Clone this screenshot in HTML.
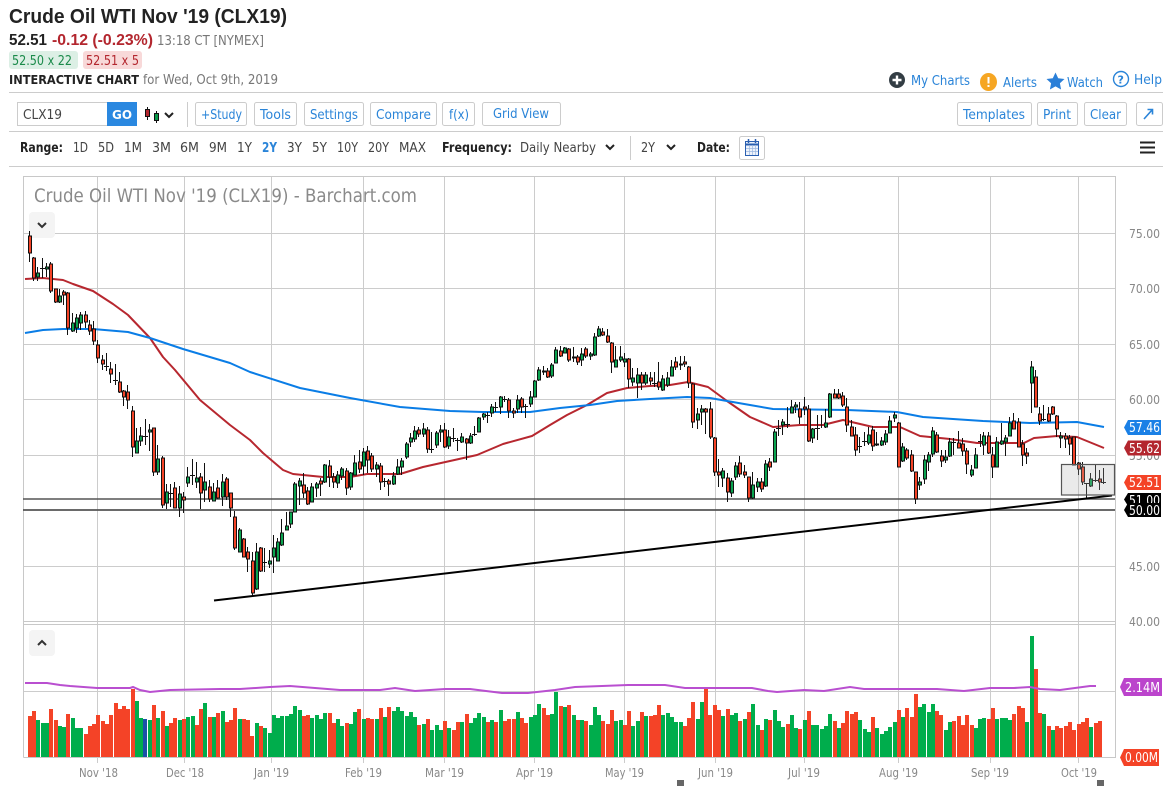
<!DOCTYPE html>
<html><head><meta charset="utf-8"><title>Crude Oil WTI Nov '19 (CLX19)</title>
<style>
html,body{margin:0;padding:0;background:#fff;width:1167px;height:786px;overflow:hidden}
svg{display:block}
text{font-family:"DejaVu Sans","Liberation Sans",sans-serif;font-size:12px}
.b{fill:#2a84d8;font-size:13.5px}
.n{fill:#444;font-size:13px}
.h{fill:#222;font-size:13px;font-weight:bold}
.a{fill:#888;font-size:12.5px}
.w{fill:#fff;font-size:13.5px}
.btn{fill:#fff;stroke:#ccc;stroke-width:1}
</style></head><body>
<svg width="1167" height="786" viewBox="0 0 1167 786" xmlns="http://www.w3.org/2000/svg">
<rect width="1167" height="786" fill="#fff"/>
<!-- header -->
<text x="9" y="23" textLength="278" lengthAdjust="spacingAndGlyphs" style="font-family:'Liberation Sans',sans-serif;font-size:20px;font-weight:bold;fill:#222">Crude Oil WTI Nov '19 (CLX19)</text>
<text x="9" y="45" textLength="38" lengthAdjust="spacingAndGlyphs" style="font-family:'Liberation Sans',sans-serif;font-size:16px;font-weight:bold;fill:#222">52.51</text>
<text x="52" y="45" textLength="101" lengthAdjust="spacingAndGlyphs" style="font-family:'Liberation Sans',sans-serif;font-size:16px;font-weight:bold;fill:#b3262e">-0.12 (-0.23%)</text>
<text x="157" y="45" textLength="107" lengthAdjust="spacingAndGlyphs" style="font-size:13.5px;fill:#777">13:18 CT [NYMEX]</text>
<rect x="9" y="51" width="69" height="18" rx="3" fill="#dcefe5"/>
<text x="12" y="65" textLength="60" lengthAdjust="spacingAndGlyphs" style="font-size:13px;fill:#1a8a4a">52.50 x 22</text>
<rect x="83" y="51" width="59" height="18" rx="3" fill="#f8d9d9"/>
<text x="86" y="65" textLength="53" lengthAdjust="spacingAndGlyphs" style="font-size:13px;fill:#b3262e">52.51 x 5</text>
<text x="9" y="84" textLength="130" lengthAdjust="spacingAndGlyphs" style="font-size:12.5px;font-weight:bold;fill:#222">INTERACTIVE CHART</text>
<text x="143" y="84" textLength="135" lengthAdjust="spacingAndGlyphs" style="font-size:13.5px;fill:#777">for Wed, Oct 9th, 2019</text>
<!-- top right links -->
<circle cx="897" cy="80" r="8" fill="#333d44"/><path d="M897 75.5v9M892.5 80h9" stroke="#fff" stroke-width="2.4"/>
<text class="b" x="911" y="85" textLength="59" lengthAdjust="spacingAndGlyphs">My Charts</text>
<ellipse cx="988.500" cy="82" rx="8.500" ry="9" fill="#f6a623"/><path d="M988.500 77v6.500M988.500 85v2" stroke="#fff" stroke-width="2"/>
<text class="b" x="1003" y="87" textLength="34" lengthAdjust="spacingAndGlyphs">Alerts</text>
<path d="M1055.500 72.500l2.700 5.700 6.300.8-4.600 4.300 1.200 6.200-5.600-3.100-5.600 3.100 1.200-6.200-4.600-4.300 6.300-.8z" fill="#2a7fd8"/>
<text class="b" x="1067" y="87" textLength="36" lengthAdjust="spacingAndGlyphs">Watch</text>
<circle cx="1121" cy="79" r="7.500" fill="none" stroke="#2a84d8" stroke-width="1.400"/>
<text x="1117.500" y="83.500" style="font-size:11px;fill:#2a84d8;font-weight:bold">?</text>
<text class="b" x="1134" y="84" textLength="28" lengthAdjust="spacingAndGlyphs">Help</text>
<path d="M9 92.500H1163M9 131.500H1163M9 166.500H1163" stroke="#ccc" stroke-width="1" fill="none"/>
<!-- toolbar -->
<rect x="17.500" y="102.500" width="90" height="23" fill="#fff" stroke="#ccc"/>
<text x="23" y="119" textLength="39" lengthAdjust="spacingAndGlyphs" style="font-size:13.5px;fill:#444">CLX19</text>
<rect x="107" y="102" width="30" height="24" fill="#2a88e0"/>
<text x="112" y="119" textLength="20" lengthAdjust="spacingAndGlyphs" style="font-size:12.5px;font-weight:bold;fill:#fff">GO</text>
<path d="M147.500 107V120M156.500 111V123" stroke="#111" stroke-width="1"/>
<rect x="145.500" y="109.500" width="4" height="7" fill="#b3262e" stroke="#111"/>
<rect x="154.500" y="113.500" width="4" height="7" fill="#0a9a4a" stroke="#111"/>
<path d="M165 113l4 4 4-4" fill="none" stroke="#222" stroke-width="2"/>
<path d="M187.500 102V127" stroke="#ccc"/>
<rect class="btn" x="195.500" y="102.500" width="51" height="23" rx="2"/><text class="b" x="201" y="119" textLength="41" lengthAdjust="spacingAndGlyphs">+Study</text>
<rect class="btn" x="254.500" y="102.500" width="42" height="23" rx="2"/><text class="b" x="260" y="119" textLength="31" lengthAdjust="spacingAndGlyphs">Tools</text>
<rect class="btn" x="304.500" y="102.500" width="59" height="23" rx="2"/><text class="b" x="310" y="119" textLength="48" lengthAdjust="spacingAndGlyphs">Settings</text>
<rect class="btn" x="370.500" y="102.500" width="66" height="23" rx="2"/><text class="b" x="376" y="119" textLength="55" lengthAdjust="spacingAndGlyphs">Compare</text>
<rect class="btn" x="442.500" y="102.500" width="32" height="23" rx="2"/><text class="b" x="449" y="119" textLength="20" lengthAdjust="spacingAndGlyphs">f(x)</text>
<rect class="btn" x="482.500" y="102.500" width="78" height="23" rx="2"/><text class="b" x="493" y="118" textLength="56" lengthAdjust="spacingAndGlyphs">Grid View</text>
<rect class="btn" x="957.500" y="102.500" width="74" height="23" rx="2"/><text class="b" x="963" y="119" textLength="62" lengthAdjust="spacingAndGlyphs">Templates</text>
<rect class="btn" x="1037.500" y="102.500" width="40" height="23" rx="2"/><text class="b" x="1043" y="119" textLength="28" lengthAdjust="spacingAndGlyphs">Print</text>
<rect class="btn" x="1084.500" y="102.500" width="42" height="23" rx="2"/><text class="b" x="1090" y="119" textLength="31" lengthAdjust="spacingAndGlyphs">Clear</text>
<rect class="btn" x="1136.500" y="102.500" width="26" height="23" rx="2"/>
<path d="M1144 119l8-9M1147.500 109.500h5v5" fill="none" stroke="#2a84d8" stroke-width="1.600"/>
<!-- range row -->
<text class="h" x="20" y="152" textLength="43" lengthAdjust="spacingAndGlyphs">Range:</text>
<text class="n" x="73" y="152" textLength="15" lengthAdjust="spacingAndGlyphs">1D</text>
<text class="n" x="98" y="152" textLength="16" lengthAdjust="spacingAndGlyphs">5D</text>
<text class="n" x="124" y="152" textLength="18" lengthAdjust="spacingAndGlyphs">1M</text>
<text class="n" x="152" y="152" textLength="19" lengthAdjust="spacingAndGlyphs">3M</text>
<text class="n" x="180" y="152" textLength="19" lengthAdjust="spacingAndGlyphs">6M</text>
<text class="n" x="209" y="152" textLength="18" lengthAdjust="spacingAndGlyphs">9M</text>
<text class="n" x="237" y="152" textLength="15" lengthAdjust="spacingAndGlyphs">1Y</text>
<text x="262" y="152" textLength="15" lengthAdjust="spacingAndGlyphs" style="font-size:13px;font-weight:bold;fill:#2a84d8">2Y</text>
<text class="n" x="287" y="152" textLength="15" lengthAdjust="spacingAndGlyphs">3Y</text>
<text class="n" x="312" y="152" textLength="15" lengthAdjust="spacingAndGlyphs">5Y</text>
<text class="n" x="337" y="152" textLength="21" lengthAdjust="spacingAndGlyphs">10Y</text>
<text class="n" x="368" y="152" textLength="21" lengthAdjust="spacingAndGlyphs">20Y</text>
<text class="n" x="399" y="152" textLength="27" lengthAdjust="spacingAndGlyphs">MAX</text>
<text class="h" x="442" y="152" textLength="70" lengthAdjust="spacingAndGlyphs">Frequency:</text>
<text class="n" x="520" y="152" textLength="76" lengthAdjust="spacingAndGlyphs">Daily Nearby</text>
<path d="M606 145l4 4 4-4M667 145l4 4 4-4" fill="none" stroke="#222" stroke-width="2"/>
<path d="M630.500 136V160" stroke="#ccc"/>
<text class="n" x="641" y="152" textLength="14" lengthAdjust="spacingAndGlyphs">2Y</text>
<text class="h" x="697" y="152" textLength="33" lengthAdjust="spacingAndGlyphs">Date:</text>
<rect class="btn" x="739.500" y="136.500" width="25" height="23" rx="2"/>
<rect x="745.500" y="141.500" width="13" height="14" fill="#eef3fb" stroke="#2a5fb0"/>
<path d="M745 144.500h14" stroke="#2a5fb0" stroke-width="2"/>
<path d="M748.500 139v4M755.500 139v4" stroke="#2a5fb0" stroke-width="1.500"/>
<path d="M749.500 145v10M752.500 145v10M755.500 145v10M746 148.500h12M746 151.500h12" stroke="#9db8e0" stroke-width=".7"/>
<path d="M1140 142.500h15M1140 147.500h15M1140 152.500h15" stroke="#222" stroke-width="2"/>
<!-- chart frame & grid -->
<path d="M97.500 177V757M184.500 177V757M271.500 177V757M363.500 177V757M444.500 177V757M534.500 177V757M624.500 177V757M715.500 177V757M804.500 177V757M898.500 177V757M990.500 177V757M1078.500 177V757" stroke="#ccc" fill="none"/>
<path d="M23 233.500H1115M23 288.500H1115M23 344.500H1115M23 399.500H1115M23 455.500H1115M23 566.500H1115M23 691.500H1115" stroke="#ccc" fill="none"/>
<path d="M23.500 757.500V176.500H1115.500V757.500H23.500M23 621.500H1115M23 624.500H1115" stroke="#c8c8c8" fill="none"/>
<path d="M97.500 757v6M184.500 757v6M271.500 757v6M363.500 757v6M444.500 757v6M534.500 757v6M624.500 757v6M715.500 757v6M804.500 757v6M898.500 757v6M990.500 757v6M1078.500 757v6" stroke="#ccc"/>
<text x="34" y="202" textLength="383" lengthAdjust="spacingAndGlyphs" style="font-size:19px;fill:#8a8a8a">Crude Oil WTI Nov '19 (CLX19) - Barchart.com</text>
<rect x="29" y="212" width="26" height="26" rx="4" fill="#f4f4f4"/>
<path d="M38 223l4 4 4-4" fill="none" stroke="#333" stroke-width="2"/>
<rect x="29" y="630" width="26" height="26" rx="4" fill="#f4f4f4"/>
<path d="M38 645l4-4 4 4" fill="none" stroke="#333" stroke-width="2"/>
<!-- horizontal levels -->
<path d="M23 499H1115" stroke="#555" stroke-width="1.500"/>
<path d="M23 510H1115" stroke="#555" stroke-width="1.800"/>
<!-- moving averages -->
<path d="M25 279L43 278L63 280L73 284L93 291L113 304L128 315L150 338L163 357L175 370L200 400L230 425L250 440L263 453L283 470L293 474L323 477L350 477L367 474L400 474L423 467L450 461L477 455L503 444L532 436L550 425L567 415L587 405L607 393L627 388L650 386L670 385L688 382L708 387L727 401L750 417L773 427L800 425L823 425L843 420L873 427L900 427L920 436L950 439L977 443L1007 443L1024 443L1034 438L1057 436L1077 437L1104 448" fill="none" stroke="#b7272f" stroke-width="2" stroke-linejoin="round"/>
<path d="M25 333L43 330L63 329L93 329L128 332L150 338L183 349L230 363L250 372L300 388L350 398L400 407L450 411L483 412L530 412L560 408L590 405L617 401L650 399L687 397L710 398L727 401L750 405L773 409L847 410L897 412L923 417L983 421L1030 423L1077 422L1104 427" fill="none" stroke="#0a7de6" stroke-width="2" stroke-linejoin="round"/>
<!-- candle wicks -->
<path stroke="#111" stroke-width="1" fill="none" d="M29.500 231V262M33.500 257V281M37.500 267V281M42.500 258V278M46.500 263V277M50.500 262V293M55.500 289V303M59.500 289V303M63.500 290V305M67.500 292V335M72.500 313V332M76.500 314V333M80.500 312V330M85.500 311V328M89.500 320V335M93.500 321V345M97.500 340V363M102.500 355V370M106.500 353V371M110.500 362V383M115.500 364V385M119.500 372V393M123.500 390V406M127.500 385V409M132.500 406V457M136.500 428V453M140.500 427V446M145.500 419V445M149.500 424V451M153.500 428V476M157.500 445V475M162.500 456V508M166.500 484V509M170.500 484V507M174.500 482V508M179.500 486V517M183.500 492V513M187.500 467V487M192.500 459V485M196.500 462V488M200.500 473V509M204.500 463V502M209.500 480V502M213.500 483V501M217.500 480V499M222.500 474V506M226.500 477V500M230.500 493V517M234.500 511V550M239.500 528V552M243.500 538V557M247.500 547V572M252.500 552V597M256.500 543V590M260.500 547V572M264.500 548V572M269.500 550V568M273.500 535V573M277.500 538V561M281.500 519V546M286.500 512V530M290.500 512V528M294.500 482V512M299.500 478V505M303.500 473V498M307.500 487V505M311.500 483V502M316.500 482V497M320.500 478V496M324.500 464V483M329.500 460V487M333.500 473V488M337.500 471V488M341.500 467V480M346.500 468V495M350.500 472V490M354.500 455V475M359.500 450V473M363.500 448V475M367.500 446V473M371.500 453V472M376.500 462V477M380.500 463V490M384.500 478V487M388.500 479V496M393.500 472V485M397.500 459V475M401.500 458V475M406.500 442V459M410.500 433V447M414.500 426V442M418.500 427V437M423.500 423V437M427.500 427V453M431.500 432V453M436.500 431V448M440.500 425V442M444.500 423V448M448.500 430V449M453.500 428V442M457.500 438V451M461.500 433V443M466.500 438V460M470.500 433V444M474.500 426V436M478.500 417V432M483.500 413V420M487.500 412V423M491.500 404V417M495.500 402V412M500.500 396V414M504.500 396V402M508.500 398V418M513.500 408V418M517.500 395V413M521.500 397V413M525.500 404V418M530.500 391V407M534.500 380V397M538.500 367V381M543.500 366V375M547.500 368V378M551.500 363V378M555.500 347V363M560.500 346V357M564.500 347V353M568.500 348V362M573.500 347V362M577.500 355V365M581.500 348V366M585.500 347V358M590.500 352V360M594.500 333V356M598.500 326V337M602.500 328V336M607.500 329V343M611.500 342V373M615.500 346V367M620.500 346V362M624.500 353V367M628.500 358V388M632.500 368V386M637.500 368V398M641.500 372V390M645.500 372V385M650.500 372V385M654.500 372V387M658.500 362V390M662.500 375V391M667.500 372V387M671.500 360V376M675.500 357V370M680.500 356V370M684.500 356V367M688.500 366V388M692.500 383V428M697.500 408V429M701.500 405V425M705.500 408V434M710.500 402V439M714.500 437V476M718.500 459V487M722.500 468V487M727.500 473V502M731.500 478V497M735.500 462V480M739.500 456V477M744.500 465V478M748.500 477V502M752.500 472V499M757.500 478V492M761.500 478V492M765.500 460V487M769.500 458V471M774.500 429V462M778.500 420V436M782.500 419V435M787.500 407V428M791.500 400V413M795.500 402V413M799.500 402V424M804.500 397V415M808.500 405V442M812.500 428V443M817.500 415V440M821.500 415V428M825.500 409V428M829.500 393V418M834.500 389V398M838.500 389V399M842.500 392V407M846.500 398V432M851.500 420V436M855.500 427V456M859.500 437V453M864.500 432V446M868.500 427V445M872.500 426V451M876.500 432V446M881.500 437V446M885.500 430V445M889.500 416V433M894.500 412V422M898.500 422V467M902.500 443V462M906.500 448V460M911.500 450V472M915.500 472V504M919.500 477V490M924.500 455V484M928.500 452V471M932.500 427V457M936.500 432V453M941.500 450V467M945.500 450V463M949.500 438V457M953.500 438V455M958.500 431V448M962.500 438V456M966.500 448V474M971.500 465V477M975.500 448V468M980.500 434V447M983.500 432V455M988.500 432V454M992.500 447V478M996.500 437V467M1001.500 423V445M1005.500 435V456M1009.500 417V436M1013.500 413V429M1018.500 418V447M1022.500 440V466M1026.500 448V464M1031.500 361V413M1035.500 370V407M1039.500 407V425M1043.500 405V421M1048.500 407V422M1052.500 406V415M1056.500 415V437M1060.500 432V448M1065.500 433V448M1069.500 435V455M1073.500 437V465M1078.500 462V475M1082.500 462V485M1086.500 483V498M1090.500 473V487M1095.500 465V482M1099.500 470V490M1103.500 468V484M40 268.500h5M104 366.500h5M113 380.500h5M143 436.500h5M168 493.500h5M190 475.500h5M262 562.500h5M382 481.500h5M429 449.500h5M451 438.500h5M455 440.500h5M472 434.500h5M485 415.500h5M493 407.500h5M502 399.500h5M523 406.500h5M652 383.500h5M776 428.500h5M785 424.500h5M815 428.500h5M857 446.500h5M862 441.500h5M951 442.500h5M978 441.500h5M1041 419.500h5M1084 483.500h5M1093 480.500h5M1101 482.500h5"/>
<!-- red bodies -->
<path fill="#f44327" stroke="#111" stroke-width="1" d="M28.500 236h3V253h-3zM32.500 258h3V278h-3zM49.500 264h3V291h-3zM54.500 289h3V302h-3zM62.500 292h3V295h-3zM66.500 293h3V328h-3zM84.500 315h3V322h-3zM88.500 325h3V331h-3zM92.500 329h3V341h-3zM96.500 345h3V358h-3zM101.500 360h3V364h-3zM109.500 369h3V374h-3zM118.500 382h3V392h-3zM122.500 391h3V397h-3zM126.500 392h3V400h-3zM131.500 411h3V447h-3zM152.500 428h3V472h-3zM161.500 458h3V505h-3zM173.500 488h3V508h-3zM182.500 497h3V500h-3zM199.500 477h3V493h-3zM208.500 487h3V499h-3zM216.500 488h3V498h-3zM225.500 479h3V497h-3zM229.500 493h3V508h-3zM233.500 517h3V548h-3zM242.500 539h3V557h-3zM246.500 552h3V559h-3zM251.500 561h3V593h-3zM259.500 548h3V571h-3zM302.500 485h3V493h-3zM306.500 491h3V504h-3zM319.500 481h3V484h-3zM328.500 466h3V477h-3zM332.500 477h3V482h-3zM345.500 471h3V488h-3zM358.500 462h3V469h-3zM366.500 451h3V460h-3zM370.500 456h3V469h-3zM379.500 466h3V482h-3zM387.500 481h3V484h-3zM417.500 430h3V434h-3zM426.500 430h3V449h-3zM443.500 430h3V447h-3zM465.500 439h3V443h-3zM507.500 400h3V411h-3zM512.500 411h3V413h-3zM520.500 399h3V407h-3zM546.500 371h3V377h-3zM559.500 351h3V356h-3zM567.500 349h3V360h-3zM576.500 357h3V362h-3zM584.500 349h3V356h-3zM601.500 332h3V335h-3zM606.500 336h3V342h-3zM610.500 343h3V362h-3zM627.500 359h3V379h-3zM640.500 375h3V383h-3zM649.500 378h3V381h-3zM657.500 382h3V387h-3zM674.500 362h3V367h-3zM683.500 362h3V364h-3zM687.500 367h3V383h-3zM691.500 384h3V422h-3zM704.500 409h3V412h-3zM709.500 409h3V437h-3zM713.500 438h3V472h-3zM717.500 472h3V475h-3zM726.500 478h3V492h-3zM738.500 463h3V474h-3zM743.500 472h3V475h-3zM747.500 477h3V498h-3zM760.500 482h3V489h-3zM768.500 462h3V467h-3zM798.500 409h3V417h-3zM803.500 407h3V409h-3zM807.500 409h3V441h-3zM833.500 394h3V398h-3zM837.500 394h3V398h-3zM841.500 396h3V405h-3zM845.500 407h3V425h-3zM850.500 427h3V436h-3zM854.500 435h3V450h-3zM871.500 430h3V446h-3zM897.500 423h3V467h-3zM905.500 450h3V458h-3zM910.500 455h3V471h-3zM914.500 472h3V499h-3zM935.500 435h3V452h-3zM940.500 456h3V461h-3zM957.500 443h3V448h-3zM961.500 444h3V451h-3zM965.500 451h3V464h-3zM987.500 436h3V453h-3zM991.500 455h3V467h-3zM1012.500 421h3V429h-3zM1017.500 422h3V447h-3zM1021.500 444h3V455h-3zM1025.500 453h3V456h-3zM1034.500 377h3V407h-3zM1038.500 414h3V421h-3zM1047.500 414h3V421h-3zM1051.500 407h3V414h-3zM1055.500 416h3V429h-3zM1064.500 436h3V439h-3zM1068.500 438h3V444h-3zM1072.500 437h3V465h-3zM1077.500 463h3V469h-3zM1081.500 467h3V482h-3zM1098.500 479h3V482h-3z"/>
<!-- green bodies -->
<path fill="#0aa34f" stroke="#111" stroke-width="1" d="M36.500 273h3V277h-3zM45.500 267h3V269h-3zM58.500 296h3V302h-3zM71.500 323h3V331h-3zM75.500 318h3V328h-3zM79.500 315h3V323h-3zM135.500 441h3V453h-3zM139.500 436h3V441h-3zM148.500 430h3V432h-3zM156.500 459h3V472h-3zM165.500 492h3V503h-3zM178.500 494h3V508h-3zM186.500 477h3V483h-3zM195.500 478h3V482h-3zM203.500 482h3V490h-3zM212.500 492h3V501h-3zM221.500 482h3V497h-3zM238.500 530h3V552h-3zM255.500 552h3V589h-3zM268.500 561h3V564h-3zM272.500 548h3V557h-3zM276.500 542h3V561h-3zM280.500 533h3V545h-3zM285.500 526h3V530h-3zM289.500 512h3V524h-3zM293.500 484h3V512h-3zM298.500 481h3V486h-3zM310.500 487h3V502h-3zM315.500 484h3V488h-3zM323.500 465h3V482h-3zM336.500 475h3V483h-3zM340.500 469h3V476h-3zM349.500 473h3V487h-3zM353.500 463h3V475h-3zM362.500 452h3V466h-3zM375.500 465h3V469h-3zM392.500 476h3V484h-3zM396.500 467h3V474h-3zM400.500 461h3V467h-3zM405.500 444h3V457h-3zM409.500 438h3V442h-3zM413.500 431h3V439h-3zM422.500 429h3V434h-3zM435.500 433h3V445h-3zM439.500 430h3V432h-3zM447.500 437h3V446h-3zM460.500 437h3V442h-3zM469.500 436h3V443h-3zM477.500 418h3V432h-3zM482.500 414h3V417h-3zM490.500 407h3V413h-3zM499.500 397h3V407h-3zM516.500 400h3V409h-3zM529.500 397h3V404h-3zM533.500 381h3V397h-3zM537.500 370h3V380h-3zM542.500 371h3V372h-3zM550.500 365h3V376h-3zM554.500 350h3V363h-3zM563.500 348h3V353h-3zM572.500 357h3V358h-3zM580.500 354h3V360h-3zM589.500 354h3V356h-3zM593.500 337h3V355h-3zM597.500 329h3V336h-3zM614.500 360h3V367h-3zM619.500 357h3V360h-3zM623.500 359h3V362h-3zM631.500 378h3V382h-3zM636.500 375h3V383h-3zM644.500 375h3V383h-3zM661.500 379h3V390h-3zM666.500 378h3V385h-3zM670.500 367h3V376h-3zM679.500 364h3V365h-3zM696.500 414h3V420h-3zM700.500 409h3V412h-3zM721.500 471h3V478h-3zM730.500 481h3V493h-3zM734.500 466h3V477h-3zM751.500 485h3V498h-3zM756.500 482h3V487h-3zM764.500 464h3V486h-3zM773.500 432h3V462h-3zM781.500 422h3V425h-3zM790.500 407h3V413h-3zM794.500 405h3V407h-3zM811.500 429h3V438h-3zM824.500 423h3V427h-3zM828.500 394h3V417h-3zM867.500 435h3V443h-3zM875.500 444h3V445h-3zM880.500 441h3V445h-3zM884.500 434h3V442h-3zM888.500 421h3V433h-3zM893.500 415h3V418h-3zM901.500 447h3V461h-3zM918.500 482h3V485h-3zM923.500 460h3V479h-3zM927.500 455h3V462h-3zM931.500 431h3V454h-3zM944.500 457h3V460h-3zM948.500 442h3V456h-3zM970.500 470h3V475h-3zM974.500 455h3V468h-3zM982.500 436h3V445h-3zM995.500 442h3V467h-3zM1000.500 441h3V444h-3zM1004.500 438h3V442h-3zM1008.500 423h3V436h-3zM1030.500 367h3V383h-3zM1059.500 436h3V438h-3zM1089.500 479h3V486h-3z"/>
<!-- trend line -->
<path d="M214 600.500L1112 495.500" stroke="#000" stroke-width="2" fill="none"/>
<!-- selection box -->
<rect x="1061.500" y="464.500" width="53" height="30.500" fill="#aaa" fill-opacity=".25" stroke="#555" stroke-width="1.200"/>
<!-- volume -->
<path fill="none" stroke="#f44327" stroke-width="4" d="M30 716V757M34 711V757M51 709V757M56 720V757M68 714V757M86 734V757M90 726V757M94 724V757M98 715V757M103 721V757M107 724V757M111 715V757M116 703V757M120 709V757M124 706V757M128 709V757M133 689V757M154 705V757M163 711V757M171 723V757M175 718V757M184 719V757M197 725V757M201 709V757M210 717V757M218 713V757M227 722V757M231 720V757M235 708V757M244 719V757M248 720V757M252 736V757M261 726V757M304 716V757M308 715V757M330 713V757M334 723V757M347 723V757M359 709V757M368 718V757M372 719V757M381 708V757M389 707V757M419 725V757M428 719V757M445 721V757M454 730V757M458 722V757M467 714V757M488 722V757M496 722V757M505 721V757M509 719V757M514 719V757M522 718V757M526 723V757M544 708V757M548 715V757M561 706V757M569 705V757M578 720V757M586 721V757M603 721V757M608 724V757M612 710V757M625 725V757M629 711V757M642 712V757M651 716V757M655 715V757M659 705V757M685 726V757M689 718V757M693 702V757M706 689V757M710 715V757M715 705V757M719 710V757M728 709V757M740 721V757M749 712V757M762 730V757M770 720V757M788 724V757M800 729V757M809 711V757M835 721V757M843 723V757M847 711V757M852 714V757M856 712V757M873 717V757M899 710V757M907 708V757M912 717V757M916 694V757M937 711V757M941 715V757M954 721V757M959 716V757M963 725V757M967 715V757M972 725V757M989 719V757M993 708V757M1014 714V757M1019 706V757M1023 708V757M1036 669V757M1040 713V757M1049 726V757M1057 726V757M1061 728V757M1066 726V757M1070 722V757M1074 730V757M1079 724V757M1083 722V757M1087 718V757M1096 723V757M1100 721V757"/>
<path fill="none" stroke="#00ad4c" stroke-width="4" d="M38 720V757M43 723V757M47 723V757M60 726V757M64 727V757M73 718V757M77 728V757M81 728V757M137 701V757M141 718V757M150 720V757M158 718V757M167 726V757M180 720V757M188 717V757M193 716V757M205 703V757M214 717V757M223 711V757M240 719V757M257 723V757M265 728V757M270 733V757M274 715V757M278 718V757M282 716V757M287 716V757M291 714V757M295 706V757M300 710V757M312 718V757M317 715V757M321 719V757M325 713V757M338 719V757M342 726V757M351 724V757M355 712V757M364 719V757M377 719V757M385 717V757M394 711V757M398 707V757M402 711V757M407 716V757M411 712V757M415 717V757M424 724V757M432 730V757M437 725V757M441 730V757M449 728V757M462 722V757M471 723V757M475 718V757M479 713V757M484 717V757M492 720V757M501 710V757M518 712V757M531 717V757M535 715V757M539 704V757M552 714V757M556 692V757M565 707V757M574 715V757M582 720V757M591 725V757M595 707V757M599 715V757M616 721V757M621 720V757M633 726V757M638 721V757M646 716V757M663 715V757M668 713V757M672 717V757M676 722V757M681 722V757M698 719V757M702 702V757M723 716V757M732 715V757M736 713V757M745 719V757M753 704V757M758 725V757M766 719V757M775 710V757M779 721V757M783 727V757M792 715V757M796 728V757M805 720V757M813 725V757M817 725V757M822 729V757M826 726V757M830 714V757M839 728V757M860 720V757M865 729V757M869 732V757M877 728V757M882 734V757M886 731V757M890 727V757M895 722V757M903 717V757M920 707V757M924 704V757M929 712V757M933 704V757M946 730V757M950 722V757M976 728V757M980 719V757M984 718V757M997 719V757M1002 718V757M1006 718V757M1010 720V757M1027 722V757M1032 636V757M1044 714V757M1053 730V757M1091 727V757"/>
<path fill="none" stroke="#1a52a8" stroke-width="4" d="M145 719V757"/>
<path d="M25 683L47 683L60 685L70 686L97 688L130 688L133 687L140 690L150 692L170 690L220 689L240 689L270 687L290 686L340 690L380 690L395 688L415 691L445 689L470 689L502 693L528 693L555 690L575 687L602 686L628 685L665 685L685 688L718 688L752 688L768 691L777 692L804 690L824 691L850 687L864 689L937 689L964 691L990 688L1014 688L1030 687L1040 689L1060 690L1090 686L1096 686" fill="none" stroke="#b94fd0" stroke-width="2"/>
<!-- axis labels -->
<text class="a" x="1129" y="238" textLength="31" lengthAdjust="spacingAndGlyphs">75.00</text>
<text class="a" x="1129" y="293" textLength="31" lengthAdjust="spacingAndGlyphs">70.00</text>
<text class="a" x="1129" y="349" textLength="31" lengthAdjust="spacingAndGlyphs">65.00</text>
<text class="a" x="1129" y="404" textLength="31" lengthAdjust="spacingAndGlyphs">60.00</text>
<text class="a" x="1129" y="460" textLength="31" lengthAdjust="spacingAndGlyphs">55.00</text>
<text class="a" x="1129" y="571" textLength="31" lengthAdjust="spacingAndGlyphs">45.00</text>
<text class="a" x="1129" y="626" textLength="31" lengthAdjust="spacingAndGlyphs">40.00</text>
<path d="M1124 427.500l4-7.500h33v15h-33z" fill="#1a80e6"/><text class="w" x="1129" y="432" textLength="31" lengthAdjust="spacingAndGlyphs">57.46</text>
<path d="M1124 448l4-7.500h33v15h-33z" fill="#b3262e"/><text class="w" x="1129" y="453" textLength="31" lengthAdjust="spacingAndGlyphs">55.62</text>
<path d="M1124 482.500l4-7.500h33v15h-33z" fill="#f44327"/><text class="w" x="1129" y="487" textLength="31" lengthAdjust="spacingAndGlyphs">52.51</text>
<path d="M1124 499.500l4-6.500h33v13h-33z" fill="#000"/><text class="w" x="1129" y="505" textLength="31" lengthAdjust="spacingAndGlyphs">51.00</text>
<path d="M1124 510l4-7h33v14h-33z" fill="#000"/><text class="w" x="1129" y="515" textLength="31" lengthAdjust="spacingAndGlyphs">50.00</text>
<path d="M1120 687l4-9h38v18h-38z" fill="#bb44cc"/><text class="w" x="1125" y="692" textLength="35" lengthAdjust="spacingAndGlyphs">2.14M</text>
<path d="M1120 757.500l4-8.500h35v17h-35z" fill="#f44327"/><text class="w" x="1125" y="762" textLength="33" lengthAdjust="spacingAndGlyphs">0.00M</text>
<text class="a" x="79" y="777" textLength="39" lengthAdjust="spacingAndGlyphs">Nov '18</text>
<text class="a" x="166" y="777" textLength="38" lengthAdjust="spacingAndGlyphs">Dec '18</text>
<text class="a" x="254" y="777" textLength="35" lengthAdjust="spacingAndGlyphs">Jan '19</text>
<text class="a" x="345" y="777" textLength="37" lengthAdjust="spacingAndGlyphs">Feb '19</text>
<text class="a" x="425" y="777" textLength="39" lengthAdjust="spacingAndGlyphs">Mar '19</text>
<text class="a" x="516" y="777" textLength="37" lengthAdjust="spacingAndGlyphs">Apr '19</text>
<text class="a" x="605" y="777" textLength="39" lengthAdjust="spacingAndGlyphs">May '19</text>
<text class="a" x="698" y="777" textLength="35" lengthAdjust="spacingAndGlyphs">Jun '19</text>
<text class="a" x="788" y="777" textLength="32" lengthAdjust="spacingAndGlyphs">Jul '19</text>
<text class="a" x="879" y="777" textLength="39" lengthAdjust="spacingAndGlyphs">Aug '19</text>
<text class="a" x="971" y="777" textLength="38" lengthAdjust="spacingAndGlyphs">Sep '19</text>
<text class="a" x="1061" y="777" textLength="36" lengthAdjust="spacingAndGlyphs">Oct '19</text>
<rect x="677" y="780" width="7" height="6" fill="#666"/>
<rect x="1097" y="780" width="7" height="6" fill="#666"/>
</svg>
</body></html>
